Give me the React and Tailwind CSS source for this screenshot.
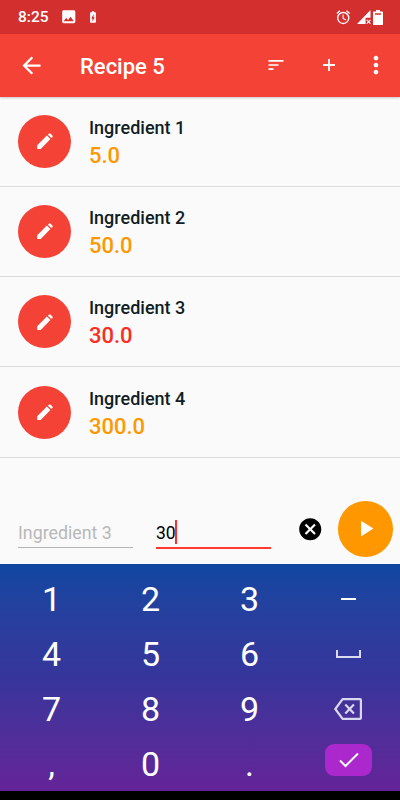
import React, { useState } from 'react';
import {
  MdArrowBack,
  MdBatteryChargingFull,
  MdCancel,
  MdImage,
  MdMoreVert,
  MdOutlineAlarm,
  MdPlayArrow,
  MdSort,
} from 'react-icons/md';

const ingredients = [
  { id: 1, name: 'Ingredient 1', amount: '5.0' },
  { id: 2, name: 'Ingredient 2', amount: '50.0' },
  { id: 3, name: 'Ingredient 3', amount: '30.0' },
  { id: 4, name: 'Ingredient 4', amount: '300.0' },
];

const keys = ['1', '2', '3', 'minus', '4', '5', '6', 'space', '7', '8', '9', 'delete', ',', '0', '.', 'enter'];

const SignalIcon = () => (
  <svg width="14" height="14" viewBox="0 0 14 14" fill="white">
    <path d="M0 14 13.500 0v7.800H8.600V14z" />
    <path d="m9.800 9.800 3.600 3.800m0-3.800-3.600 3.800" stroke="white" strokeWidth="1.200" />
  </svg>
);

const BatteryIcon = () => (
  <svg width="10" height="15" viewBox="0 0 10 15" fill="white">
    <path fillRule="evenodd" d="M3 0h4v1.500h2.200c.5 0 .8.3.8.8v11.900c0 .5-.3.8-.8.8H.8c-.5 0-.8-.3-.8-.8V2.300c0-.5.3-.8.8-.8H3zM2 3.300v1.400h6V3.300z" />
  </svg>
);

const PlusIcon = () => (
  <svg width="12" height="12" viewBox="0 0 12 12" stroke="white" strokeWidth="1.800">
    <path d="M6 0v12M0 6h12" />
  </svg>
);

const PencilIcon = () => (
  <svg width="16" height="16" viewBox="0 0 16 16" fill="white">
    <path d="M.2 15.900v-3.700L9.900 2.600l3.500 3.500-9.700 9.800z" />
    <path d="m10.900 1.700 1-1q.9-.9 1.800 0l1.700 1.700q.8.8 0 1.700l-1 1z" />
  </svg>
);

const BackspaceIcon = () => (
  <svg width="28" height="22" viewBox="0 0 28 22" fill="none" stroke="#dcd7f0" strokeWidth="2.200" strokeLinejoin="round">
    <path d="M8.600 1.100H26q.9 0 .9.900v18q0 .9-.9.9H8.600L1.300 11z" />
    <path d="m11.300 6.600 8.600 8.800m0-8.800-8.600 8.800" />
  </svg>
);

const StatusBar = () => (
  <div className="flex h-[34px] items-center bg-[#d32f2f] pl-[18px] pr-[17px] text-white">
    <span className="w-[43px] pt-[2px] text-[15.500px] font-medium leading-none">8:25</span>
    <MdImage size={17.5} className="-ml-px" />
    <MdBatteryChargingFull size={14} className="ml-[8px]" />
    <div className="ml-auto flex items-center">
      <MdOutlineAlarm size={16.5} />
      <div className="ml-[6px]">
        <SignalIcon />
      </div>
      <div className="ml-[2px]">
        <BatteryIcon />
      </div>
    </div>
  </div>
);

const AppBar = () => (
  <div className="relative flex h-[62.500px] items-center bg-[#f44336] pl-[17.500px] pr-[10.500px] text-white shadow-[0_1px_2px_rgba(0,0,0,0.2)]">
    <MdArrowBack size={27} />
    <h1 className="ml-[35.500px] pt-[3px] text-[22px] font-medium leading-none">Recipe 5</h1>
    <div className="ml-auto flex items-center">
      <MdSort size={20} />
      <div className="ml-[37.500px]">
        <PlusIcon />
      </div>
      <MdMoreVert size={28} className="ml-[26.500px]" />
    </div>
  </div>
);

const IngredientRow = ({ item, active }) => (
  <li className="flex h-[90.300px] items-center border-b border-[#dcdcdc] pl-[18px]">
    <button className="flex size-[53px] items-center justify-center rounded-full bg-[#f44336] text-white">
      <PencilIcon />
    </button>
    <div className="ml-[18px] pt-[2px]">
      <p className="text-[18px] font-medium leading-[26px] text-[#101d24]">{item.name}</p>
      <p className={`text-[22px] font-medium leading-[29px] ${active ? 'text-[#fb2c22]' : 'text-[#ff9800]'}`}>
        {item.amount}
      </p>
    </div>
  </li>
);

const Key = ({ value }) => {
  if (value === 'minus') {
    return <span className="h-[2.500px] w-[14.500px] bg-white" />;
  }
  if (value === 'space') {
    return <span className="h-[7.500px] w-[25px] border-2 border-t-0 border-[#d9daf0]" />;
  }
  if (value === 'delete') {
    return (
      <span className="pr-[1px]">
        <BackspaceIcon />
      </span>
    );
  }
  if (value === 'enter') {
    return (
      <span className="-mt-2 flex h-8 w-[47px] items-center justify-center rounded-[9px] bg-[#aa28cc]">
        <svg width="20" height="16" viewBox="0 0 20 16" fill="none" stroke="white" strokeWidth="2">
          <path d="m1 8.500 5.500 5.500L19 1.500" />
        </svg>
      </span>
    );
  }
  return <span className="text-[34px] leading-none">{value}</span>;
};

const App = () => {
  const [selected] = useState(3);
  const current = ingredients.find((item) => item.id === selected);

  return (
    <div className="flex h-[800px] w-[400px] flex-col overflow-hidden bg-[#fafafa] font-['Roboto',sans-serif]">
      <StatusBar />
      <AppBar />

      {/* Ingredient list */}
      <ul>
        {ingredients.map((item) => (
          <IngredientRow key={item.id} item={item} active={item.id === selected} />
        ))}
      </ul>

      {/* Amount editor */}
      <div className="flex flex-1 items-end pl-[18px] pr-[7px]">
        <div className="mb-[15.500px] h-[27px] w-[115px] border-b border-[#b4b4b4] text-[17.800px] leading-[24px] text-[#b8b8b8]">
          {current.name}
        </div>
        <div className="mb-[14.500px] ml-[23px] flex h-[29px] w-[115px] border-b-2 border-[#ff3b30] text-[17.500px] leading-[27px] tracking-[-0.2px] text-black">
          30
          <span className="h-6 w-[2px] bg-[#ff2d2d]" />
        </div>
        <MdCancel size={26.5} className="mb-[21.500px] ml-[25.500px] text-black" />
        <button className="mb-[7px] ml-auto flex size-[55.500px] items-center justify-center rounded-full bg-[#ff9800] text-white">
          <MdPlayArrow size={27} className="ml-[1px]" />
        </button>
      </div>

      {/* Keypad */}
      <div className="h-[227.500px] bg-linear-to-b from-[#0d47a1] via-[#36359b] to-[#642398] px-[2px] pt-[8px] text-white">
        <div className="grid grid-cols-4 grid-rows-[repeat(4,55px)]">
          {keys.map((key) => (
            <div key={key} className="flex items-center justify-center">
              <Key value={key} />
            </div>
          ))}
        </div>
      </div>
      <div className="h-[9px] bg-black" />
    </div>
  );
};

export default App;
